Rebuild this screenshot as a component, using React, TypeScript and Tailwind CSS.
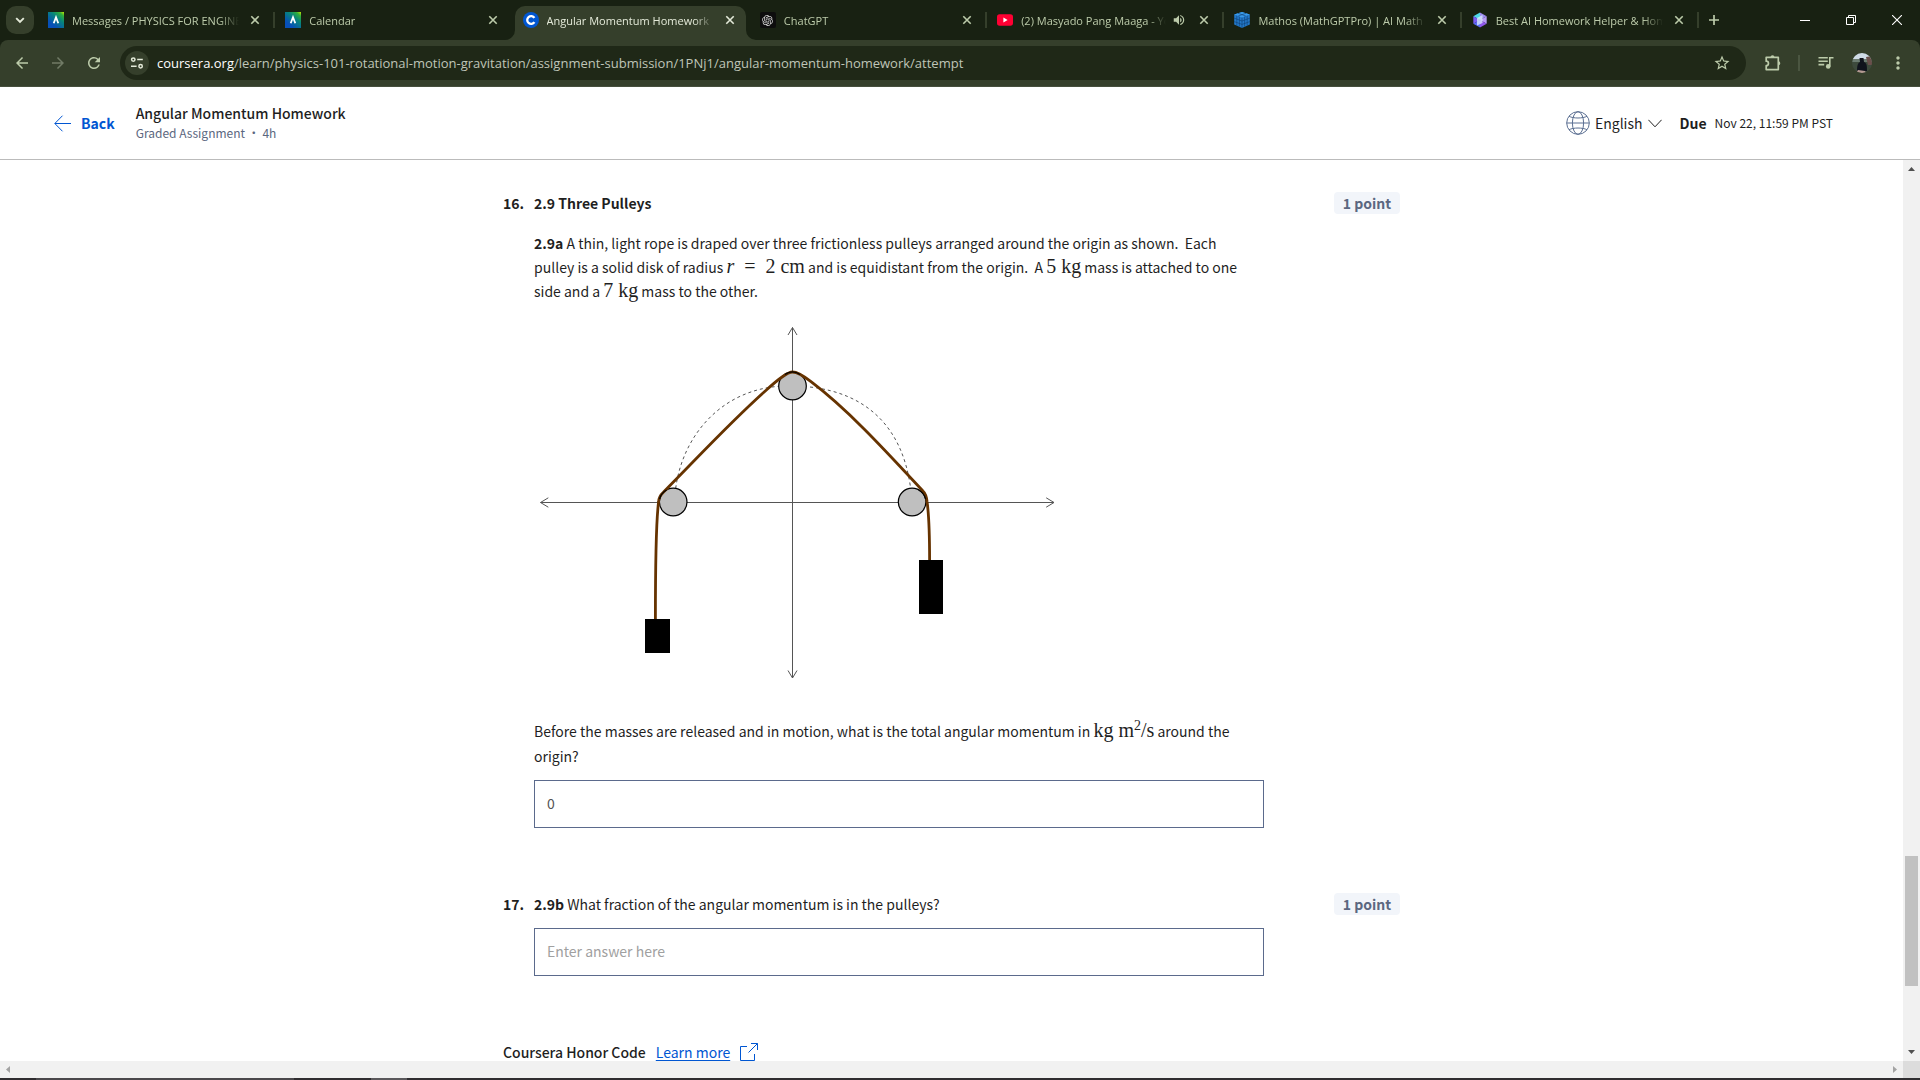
import React, { useState } from 'react';
import { MdArrowBack, MdArrowForward, MdRefresh, MdStarBorder, MdMoreVert, MdVolumeUp } from 'react-icons/md';
import { RiOpenaiFill } from 'react-icons/ri';

type TabIcon = 'lms' | 'coursera' | 'chatgpt' | 'youtube' | 'mathos' | 'helper';

interface BrowserTab {
  title: string;
  icon: TabIcon;
  active?: boolean;
  audible?: boolean;
  separator?: boolean;
}

const tabs: BrowserTab[] = [
  { title: 'Messages / PHYSICS FOR ENGINEERS', icon: 'lms', separator: true },
  { title: 'Calendar', icon: 'lms' },
  { title: 'Angular Momentum Homework', icon: 'coursera', active: true },
  { title: 'ChatGPT', icon: 'chatgpt', separator: true },
  { title: '(2) Masyado Pang Maaga - YouTube', icon: 'youtube', audible: true, separator: true },
  { title: 'Mathos (MathGPTPro) | AI Math Solver', icon: 'mathos', separator: true },
  { title: 'Best AI Homework Helper & Homework', icon: 'helper', separator: true },
];

const Favicon: React.FC<{ icon: TabIcon }> = ({ icon }) => {
  switch (icon) {
    case 'lms':
      return (
        <svg className="h-4 w-4 shrink-0" viewBox="0 0 16 16">
          <defs>
            <linearGradient id="lms" x1="1" y1="0" x2="0.3" y2="0.8">
              <stop offset="0" stopColor="#c8e600" />
              <stop offset="0.2" stopColor="#2fae3c" />
              <stop offset="0.5" stopColor="#07847c" />
              <stop offset="1" stopColor="#0750b8" />
            </linearGradient>
          </defs>
          <rect width="16" height="16" fill="url(#lms)" />
          <path d="M5.7 11.3 8 5.3l2.3 6" fill="none" stroke="#fff" strokeWidth="1.8" />
        </svg>
      );
    case 'coursera':
      return (
        <svg className="h-4 w-4 shrink-0" viewBox="0 0 16 16">
          <circle cx="8" cy="8" r="8" fill="#0056d2" />
          <path d="M11.4 5.9A3.9 3.9 0 1 0 11.4 10.1" fill="none" stroke="#fff" strokeWidth="2.3" />
        </svg>
      );
    case 'chatgpt':
      return (
        <span className="flex h-4 w-4 shrink-0 items-center justify-center rounded-xs bg-[#0d0d0d] text-[#d8d8d8]">
          <RiOpenaiFill size={13} />
        </span>
      );
    case 'youtube':
      return (
        <svg className="h-4 w-4 shrink-0" viewBox="0 0 16 16">
          <rect y="2.3" width="16" height="11.4" rx="2.6" fill="#ff0033" />
          <path d="M6.4 5.6v4.8L10.6 8z" fill="#fff" />
        </svg>
      );
    case 'mathos':
      return (
        <svg className="h-4 w-4 shrink-0" viewBox="0 0 16 16">
          <path d="M8 0l7.8 2.6v10L8 16 .2 12.6v-10z" fill="#2378c8" />
          <path d="M8 0l7.8 2.6L8 5.6.2 2.6z" fill="#3a9bea" />
          <path
            d="M.2 6.2 8 9l7.8-2.8M.2 9.6 8 12.4l7.8-2.8M8 5.6V16M2.8 3.6v10M5.4 4.6v10M10.6 4.6v10M13.2 3.6v10M4 1.3l8 2.8M12 1.3 4 4.1"
            fill="none"
            stroke="#0f3f73"
            strokeWidth="0.6"
          />
        </svg>
      );
    default:
      return (
        <svg className="h-4 w-4 shrink-0" viewBox="0 0 16 16">
          <path d="M8 .6 1.3 4.3 8 8z" fill="#4fd8e8" />
          <path d="M8 .6l6.7 3.7L8 8z" fill="#9c8cf0" />
          <path d="M1.3 4.3v7.4L8 8z" fill="#7a5cf4" />
          <path d="M14.7 4.3v7.4L8 8z" fill="#b79bf5" />
          <path d="M1.3 11.7 8 15.4V8z" fill="#5a6cf6" />
          <path d="M14.7 11.7 8 15.4V8z" fill="#8f57ea" />
          <path d="M5 6l5.5-3v8L5 13.5z" fill="#dff2ff" opacity="0.75" />
        </svg>
      );
  }
};

const CloseIcon: React.FC = () => (
  <svg className="h-4 w-4" viewBox="0 0 16 16" stroke="currentColor" strokeWidth="1.6">
    <path d="M4.3 4.3l7.4 7.4M11.7 4.3l-7.4 7.4" />
  </svg>
);

const TabItem: React.FC<{ tab: BrowserTab }> = ({ tab }) => (
  <div className="flex min-w-0 flex-1 items-stretch pt-[6px]">
    <div
      className={
        tab.active
          ? 'relative flex min-w-0 flex-1 items-center rounded-t-[10px] bg-[#353f2b] px-2 pb-[6px] text-[#e4ead9]'
          : 'flex min-w-0 flex-1 items-center px-2 pb-[6px] text-[#bccbaa]'
      }
    >
      {tab.active && (
        <>
          <svg className="absolute bottom-0 -left-[10px] h-[10px] w-[10px]" viewBox="0 0 10 10">
            <path d="M10 0v10H0A10 10 0 0 0 10 0z" fill="#353f2b" />
          </svg>
          <svg className="absolute -right-[10px] bottom-0 h-[10px] w-[10px]" viewBox="0 0 10 10">
            <path d="M0 0v10h10A10 10 0 0 1 0 0z" fill="#353f2b" />
          </svg>
        </>
      )}
      <Favicon icon={tab.icon} />
      <span className="mt-0.5 ml-2 min-w-0 flex-1 overflow-hidden mask-r-from-88% font-['Open_Sans',sans-serif] text-[11px] leading-5 font-medium whitespace-nowrap">
        {tab.title}
      </span>
      {tab.audible && <MdVolumeUp size={14} className="mr-0.5 ml-1.5 shrink-0" />}
      <button type="button" aria-label="Close tab" className="ml-2 shrink-0">
        <CloseIcon />
      </button>
    </div>
    <div className="flex w-[6px] shrink-0 items-center justify-center pb-[6px]">
      {tab.separator && <span className="h-4 w-[2px] bg-[#353f2b]" />}
    </div>
  </div>
);

const TabStrip: React.FC = () => (
  <div className="flex h-10 shrink-0 bg-[#182112]">
    <button
      type="button"
      aria-label="Search tabs"
      className="mx-[6px] my-[6px] flex h-7 w-7 shrink-0 items-center justify-center rounded-[10px] bg-[#353f2b] text-[#e4ead9]"
    >
      <svg className="h-4 w-4" viewBox="0 0 16 16" fill="none" stroke="currentColor" strokeWidth="1.9">
        <path d="M4.2 6.2 8 10l3.8-3.8" />
      </svg>
    </button>
    <div className="flex min-w-0 flex-1">
      {tabs.map((tab) => (
        <TabItem key={tab.title} tab={tab} />
      ))}
    </div>
    <button type="button" aria-label="New tab" className="flex w-[26px] items-center justify-center text-[#bccbaa]">
      <svg className="h-3 w-3" viewBox="0 0 12 12" stroke="currentColor" strokeWidth="1.7">
        <path d="M6 1v10M1 6h10" />
      </svg>
    </button>
    <div className="ml-[55px] flex shrink-0 text-white">
      <button type="button" aria-label="Minimize" className="flex w-[46px] items-center justify-center">
        <svg className="h-[10px] w-[10px]" viewBox="0 0 10 10" stroke="currentColor">
          <path d="M0 5.5h10" />
        </svg>
      </button>
      <button type="button" aria-label="Restore" className="flex w-[46px] items-center justify-center">
        <svg className="h-[10px] w-[10px]" viewBox="0 0 10 10" fill="none" stroke="currentColor">
          <path d="M.5 2.5h7v7h-7zM2.5 2.5v-2h7v7h-2" />
        </svg>
      </button>
      <button type="button" aria-label="Close" className="flex w-[46px] items-center justify-center">
        <svg className="h-[10px] w-[10px]" viewBox="0 0 10 10" stroke="currentColor" strokeWidth="1.1">
          <path d="M0 0l10 10M10 0 0 10" />
        </svg>
      </button>
    </div>
  </div>
);

const Toolbar: React.FC = () => (
  <div className="shrink-0 bg-[#182112]">
    <div className="flex h-[47px] items-center rounded-t-lg border-b border-[#464f3d] bg-[#353f2b] text-[#bccbaa]">
      <button type="button" aria-label="Back" className="ml-1 flex h-9 w-9 items-center justify-center">
        <MdArrowBack size={18} />
      </button>
      <button type="button" aria-label="Forward" className="flex h-9 w-9 items-center justify-center text-[#717b66]">
        <MdArrowForward size={18} />
      </button>
      <button type="button" aria-label="Reload" className="flex h-9 w-9 items-center justify-center">
        <MdRefresh size={18} />
      </button>
      <div className="ml-2 flex h-[34px] min-w-0 flex-1 items-center rounded-full bg-[#1f2817] pr-[15px] pl-[5px]">
        <button
          type="button"
          aria-label="View site information"
          className="flex h-6 w-6 shrink-0 items-center justify-center rounded-full bg-[#353f2b] text-[#e4ead9]"
        >
          <svg className="h-4 w-4" viewBox="0 0 16 16" fill="none" stroke="currentColor" strokeWidth="1.5">
            <circle cx="4.3" cy="4.6" r="1.7" />
            <path d="M8.2 4.6h5.6M2 11.2h5.6" />
            <circle cx="11.6" cy="11.2" r="1.7" />
          </svg>
        </button>
        <div className="ml-2 min-w-0 flex-1 truncate font-['Open_Sans',sans-serif] text-[13px] leading-5 text-[#bfc5b8]">
          <span className="text-white">coursera.org</span>
          /learn/physics-101-rotational-motion-gravitation/assignment-submission/1PNj1/angular-momentum-homework/attempt
        </div>
        <button type="button" aria-label="Bookmark this tab" className="shrink-0">
          <MdStarBorder size={18} />
        </button>
      </div>
      <button type="button" aria-label="Extensions" className="ml-[18px]">
        <svg className="h-[18px] w-[18px]" viewBox="0 0 18 18" fill="none" stroke="currentColor" strokeWidth="1.7">
          <path d="M2.2 3.3h12.1v12.3H2.2v-3.9a2.2 2.2 0 0 0 0-4.5z" strokeLinejoin="round" />
          <path d="M6.5 3.3a2 2 0 0 1 4 0zM14.3 7.3a2 2 0 0 1 0 4z" fill="currentColor" stroke="none" />
        </svg>
      </button>
      <span className="ml-4 h-4 w-[2px] bg-[#4b5641]" />
      <button type="button" aria-label="Media controls" className="ml-[18px]">
        <svg className="h-4 w-4" viewBox="0 0 16 16" fill="none" stroke="currentColor" strokeWidth="1.6">
          <path d="M.5 2.8h9.3M.5 6.2h9.3M.5 9.6h5.7M11.8 11.5V2.8h3.7" />
          <circle cx="10.2" cy="11.4" r="2.3" fill="currentColor" stroke="none" />
        </svg>
      </button>
      <button type="button" aria-label="Profile" className="ml-[18px]">
        <svg className="h-5 w-5 rounded-full" viewBox="0 0 20 20">
          <rect width="20" height="20" fill="#3d4a3c" />
          <rect width="20" height="6" fill="#cfdbe6" />
          <rect y="6" width="20" height="3" fill="#6b7b70" />
          <path d="M14 4l6-1v9h-4z" fill="#6a4f4b" />
          <path d="M5 18c0-6 1-8 3-9l-.5-4h4l.5 4c3 1 3 4 3 9z" fill="#10131c" />
          <path d="M4 20l2-3 7 1 1 2z" fill="#b59a92" />
        </svg>
      </button>
      <button type="button" aria-label="Browser menu" className="mr-3 ml-4">
        <MdMoreVert size={20} />
      </button>
    </div>
  </div>
);

const AssignmentHeader: React.FC = () => (
  <header className="flex h-[73px] shrink-0 items-center border-b border-[#bbbbbb] bg-white pr-[87px] pl-[54px]">
    <a href="#back" className="flex items-center text-[14px] leading-6 font-bold text-[#0056d2]">
      <svg className="mr-[10px] h-[17px] w-[17px]" viewBox="0 0 17 17" fill="none" stroke="currentColor">
        <path d="M17 8.5H1M8.5.7.8 8.5l7.7 7.8" />
      </svg>
      Back
    </a>
    <div className="ml-[21px]">
      <h1 className="text-[14px] leading-5 font-medium text-[#1f1f1f]">Angular Momentum Homework</h1>
      <p className="text-[12px] leading-5 text-[#5b6780]">Graded Assignment • 4h</p>
    </div>
    <button type="button" className="ml-auto flex items-center text-[14px] leading-6 text-[#1f1f1f]">
      <svg className="mr-[5px] h-6 w-6" viewBox="0 0 24 24" fill="none" stroke="#5b6f92">
        <circle cx="12" cy="12" r="11.3" />
        <ellipse cx="12" cy="12" rx="5.6" ry="11.3" />
        <path d="M.7 12h22.6M3 5.2c4 2.4 14 2.4 18 0M3 18.8c4-2.4 14-2.4 18 0" />
      </svg>
      English
      <svg className="ml-[5px] h-[14px] w-[14px]" viewBox="0 0 14 14" fill="none" stroke="currentColor">
        <path d="M.4 3.8 7 10.8l6.6-7" />
      </svg>
    </button>
    <span className="ml-[18px] text-[14px] leading-6 font-bold text-[#1f1f1f]">Due</span>
    <span className="ml-2 text-[12px] leading-6 text-[#1f1f1f]">Nov 22, 11:59 PM PST</span>
  </header>
);

const Tex: React.FC<{ children: React.ReactNode }> = ({ children }) => (
  <span className="font-['Liberation_Serif',serif] text-[20px] leading-none whitespace-nowrap">{children}</span>
);

const PulleyDiagram: React.FC = () => (
  <svg className="block h-[380px] w-[526px]" viewBox="0 0 526 380" fill="none" role="img" aria-label="Three pulleys">
    <g stroke="#555">
      <path d="M258.5 17.5V368M6.5 192.5H520" />
      <path d="M254 25l4.5-7.5L263 25M254 360.5l4.5 7.5 4.5-7.5M14.3 187.8l-7.8 4.7 7.8 4.7M512.2 187.8l7.8 4.7-7.8 4.7" />
    </g>
    <path
      d="M141.7 178.3C148.5 126.7 186 81 244.6 76.3M276 77C332.4 83.3 368 116.7 376.4 176.7"
      stroke="#555"
      strokeDasharray="3 3"
    />
    <g fill="#bfbfbf" stroke="#000" strokeWidth="1.2">
      <circle cx="258.5" cy="76" r="13.8" />
      <circle cx="139.2" cy="192" r="13.8" />
      <circle cx="378.1" cy="192" r="13.8" />
    </g>
    <path
      d="M121.4 309.5C121.4 260 121.7 213.3 124.6 192Q124.6 186.7 129.6 182C164.6 146.7 196.7 111.7 232.4 80Q252 62 258.5 62Q264.6 62 277 71.7C314.6 100 353.9 143.3 388.9 181Q392.4 184.3 393.1 192C395.6 210 395.6 230 395.6 250.6"
      stroke="#663300"
      strokeWidth="2.8"
    />
    <path
      d="M251 64.4a13.8 13.8 0 0 1 15 0M125.6 189a13.8 13.8 0 0 1 7-9M384.6 180a13.8 13.8 0 0 1 7 9"
      stroke="#000"
      strokeWidth="1.2"
    />
    <path d="M111 309h25v34h-25zM385 250h24v54h-24z" fill="#000" />
  </svg>
);

interface QuestionProps {
  number: number;
  children: React.ReactNode;
}

const Question: React.FC<QuestionProps> = ({ number, children }) => (
  <section className="flex items-start">
    <span className="w-[31px] shrink-0 leading-6 font-bold">{number}.</span>
    <div className="min-w-0 flex-1">{children}</div>
    <span className="mt-[1px] ml-[70px] w-[66px] shrink-0 rounded-sm bg-[#f2f5fa] text-center leading-[22px] font-bold text-[#5b6780]">
      1 point
    </span>
  </section>
);

const inputClass =
  'block h-12 w-full border border-[#5b6a8c] bg-white px-3 pb-0.5 text-[14px] leading-6 text-[#555] placeholder:text-[#a0a0a0] focus:outline-none';

const VerticalScrollbar: React.FC = () => (
  <div className="flex w-[17px] shrink-0 flex-col items-center bg-[#f1f1f1]">
    <svg className="h-[17px] w-[17px] shrink-0" viewBox="0 0 17 17">
      <path d="M5 11l3.5-4 3.5 4z" fill="#505050" />
    </svg>
    <div className="grow-[679]" />
    <div className="w-[13px] grow-[130] bg-[#c1c1c1]" />
    <div className="grow-[58]" />
    <svg className="h-[17px] w-[17px] shrink-0" viewBox="0 0 17 17">
      <path d="M5 6l3.5 4L12 6z" fill="#505050" />
    </svg>
  </div>
);

const HorizontalScrollbar: React.FC = () => (
  <div className="flex h-[17px] shrink-0 bg-[#f1f1f1]">
    <svg className="h-[17px] w-[17px]" viewBox="0 0 17 17">
      <path d="M10 5v7L6 8.5z" fill="#a3a3a3" />
    </svg>
    <svg className="ml-auto h-[17px] w-[17px]" viewBox="0 0 17 17">
      <path d="M7 5v7l4-3.5z" fill="#a3a3a3" />
    </svg>
    <div className="w-[17px] bg-[#dcdcdc]" />
  </div>
);

const App: React.FC = () => {
  const [momentum, setMomentum] = useState('0');
  const [fraction, setFraction] = useState('');

  return (
    <div className="flex h-screen flex-col overflow-hidden bg-white font-['Noto_Sans_CJK_SC',sans-serif]">
      <TabStrip />
      <Toolbar />
      <AssignmentHeader />

      <div className="flex min-h-0 flex-1">
        <main className="min-w-0 flex-1 overflow-hidden text-[14px] text-[#1f1f1f]">
          <div className="mx-auto max-w-[897px] pt-[31px]">
            <Question number={16}>
              <h2 className="leading-6 font-bold">2.9 Three Pulleys</h2>
              <p className="mt-4 max-w-[720px] leading-6">
                <b>2.9a</b> A thin, light rope is draped over three frictionless pulleys arranged around the origin as
                shown.&nbsp; Each pulley is a solid disk of radius{' '}
                <Tex>
                  <i>r</i>&nbsp; =&nbsp; 2 cm
                </Tex>{' '}
                and is equidistant from the origin.&nbsp; A <Tex>5 kg</Tex> mass is attached to one side and a{' '}
                <Tex>7 kg</Tex> mass to the other.
              </p>
              <div className="mt-[7px]">
                <PulleyDiagram />
              </div>
              <label htmlFor="momentum" className="mt-[29px] block max-w-[720px] leading-[25px]">
                Before the masses are released and in motion, what is the total angular momentum in{' '}
                <Tex>
                  kg m<sup className="text-[14px]">2</sup>/s
                </Tex>{' '}
                around the origin?
              </label>
              <input
                id="momentum"
                type="text"
                className={`${inputClass} mt-[11px]`}
                value={momentum}
                onChange={(e) => setMomentum(e.target.value)}
              />
            </Question>

            <div className="mt-16">
              <Question number={17}>
                <label htmlFor="fraction" className="block leading-6">
                  <b>2.9b</b> What fraction of the angular momentum is in the pulleys?
                </label>
                <input
                  id="fraction"
                  type="text"
                  placeholder="Enter answer here"
                  className={`${inputClass} mt-3`}
                  value={fraction}
                  onChange={(e) => setFraction(e.target.value)}
                />
              </Question>
            </div>

            <div className="mt-16 flex items-center leading-6">
              <span className="font-medium">Coursera Honor Code</span>
              <a href="#honor-code" className="ml-[10px] flex items-center text-[#0056d2]">
                <span className="underline underline-offset-2">Learn more</span>
                <svg className="ml-[10px] h-[18px] w-[18px]" viewBox="0 0 18 18" fill="none" stroke="currentColor">
                  <path d="M7 3.5H.5v14h14V11M8.5 9.5l9-9M11 .5h6.5V7" />
                </svg>
              </a>
            </div>
          </div>
        </main>
        <VerticalScrollbar />
      </div>
      <HorizontalScrollbar />
      <div className="flex h-[2px] shrink-0 bg-[#2f2d30]">
        <div className="ml-9 w-[258px] bg-[#4a484b]" />
        <div className="ml-[77px] w-9 bg-[#5a585b]" />
      </div>
    </div>
  );
};

export default App;
